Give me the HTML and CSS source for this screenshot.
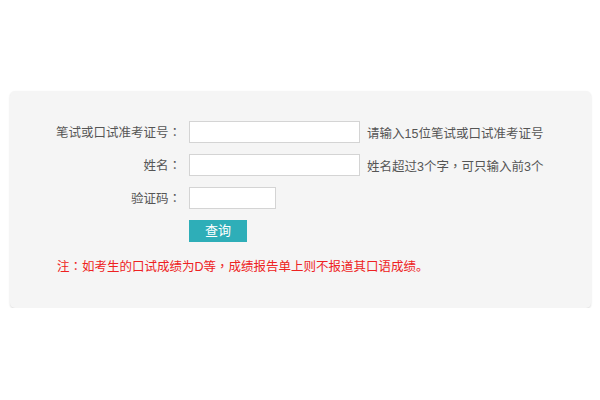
FILE: index.html
```html
<!DOCTYPE html>
<html lang="zh-CN">
<head>
    <meta charset="UTF-8">
    <title>成绩查询</title>
    <link rel="stylesheet" href="styles.css">
</head>
<body>
    <div class="panel">
        <form class="query-form">
            <label class="field-label" for="zkzh">笔试或口试准考证号<span class="punc">：</span></label>
            <div class="field">
                <input type="text" id="zkzh" class="ipt ipt-long">
                <span class="hint">请输入15位笔试或口试准考证号</span>
            </div>

            <label class="field-label" for="xm">姓名<span class="punc">：</span></label>
            <div class="field">
                <input type="text" id="xm" class="ipt ipt-long">
                <span class="hint">姓名超过3个字<span class="punc">，</span>可只输入前3个</span>
            </div>

            <label class="field-label" for="yzm">验证码<span class="punc">：</span></label>
            <div class="field">
                <input type="text" id="yzm" class="ipt ipt-short">
            </div>

            <span></span>
            <div class="field">
                <button type="button" class="btn-query">查询</button>
            </div>
        </form>
        <p class="note">注<span class="punc">：</span>如考生的口试成绩为D等<span class="punc">，</span>成绩报告单上则不报道其口语成绩。</p>
    </div>
</body>
</html>
```

FILE: styles.css
```css
body {
    margin: 0;
    background: #ffffff;
    font-family: "Liberation Sans", "Noto Sans CJK SC", sans-serif;
    font-size: 12.5px;
    color: #555555;
}

/* 全角标点居中显示 */
.punc {
    font-family: "Noto Sans CJK TC", sans-serif;
    font-feature-settings: "locl" 0;
}

.panel {
    margin: 91px 9px 0 10px;
    height: 217px;
    box-sizing: border-box;
    padding-top: 30px;
    background: #f5f5f5;
    border-radius: 5px;
    box-shadow: 0 1px 2px rgba(0, 0, 0, 0.15);
}

.query-form {
    display: grid;
    grid-template-columns: 171px auto;
    grid-auto-rows: 22px;
    column-gap: 8px;
    row-gap: 11px;
    align-items: center;
}

.field-label {
    text-align: right;
    line-height: 22px;
    height: 22px;
}

.field {
    display: flex;
    align-items: center;
    gap: 7px;
    height: 22px;
}

.ipt {
    height: 22px;
    box-sizing: border-box;
    border: 1px solid #d4d4d4;
    background: #ffffff;
    padding: 0 4px;
    margin: 0;
    font-size: 12px;
}

.ipt-long {
    width: 171px;
}

.ipt-short {
    width: 87px;
}

.btn-query {
    width: 58px;
    height: 22px;
    border: none;
    background: #2eaeb8;
    color: #ffffff;
    font-family: inherit;
    font-size: 13px;
    line-height: 22px;
    padding: 0;
    cursor: pointer;
}

.note {
    margin: 15px 0 0 47px;
    color: #ee2222;
    line-height: 18px;
}
```
